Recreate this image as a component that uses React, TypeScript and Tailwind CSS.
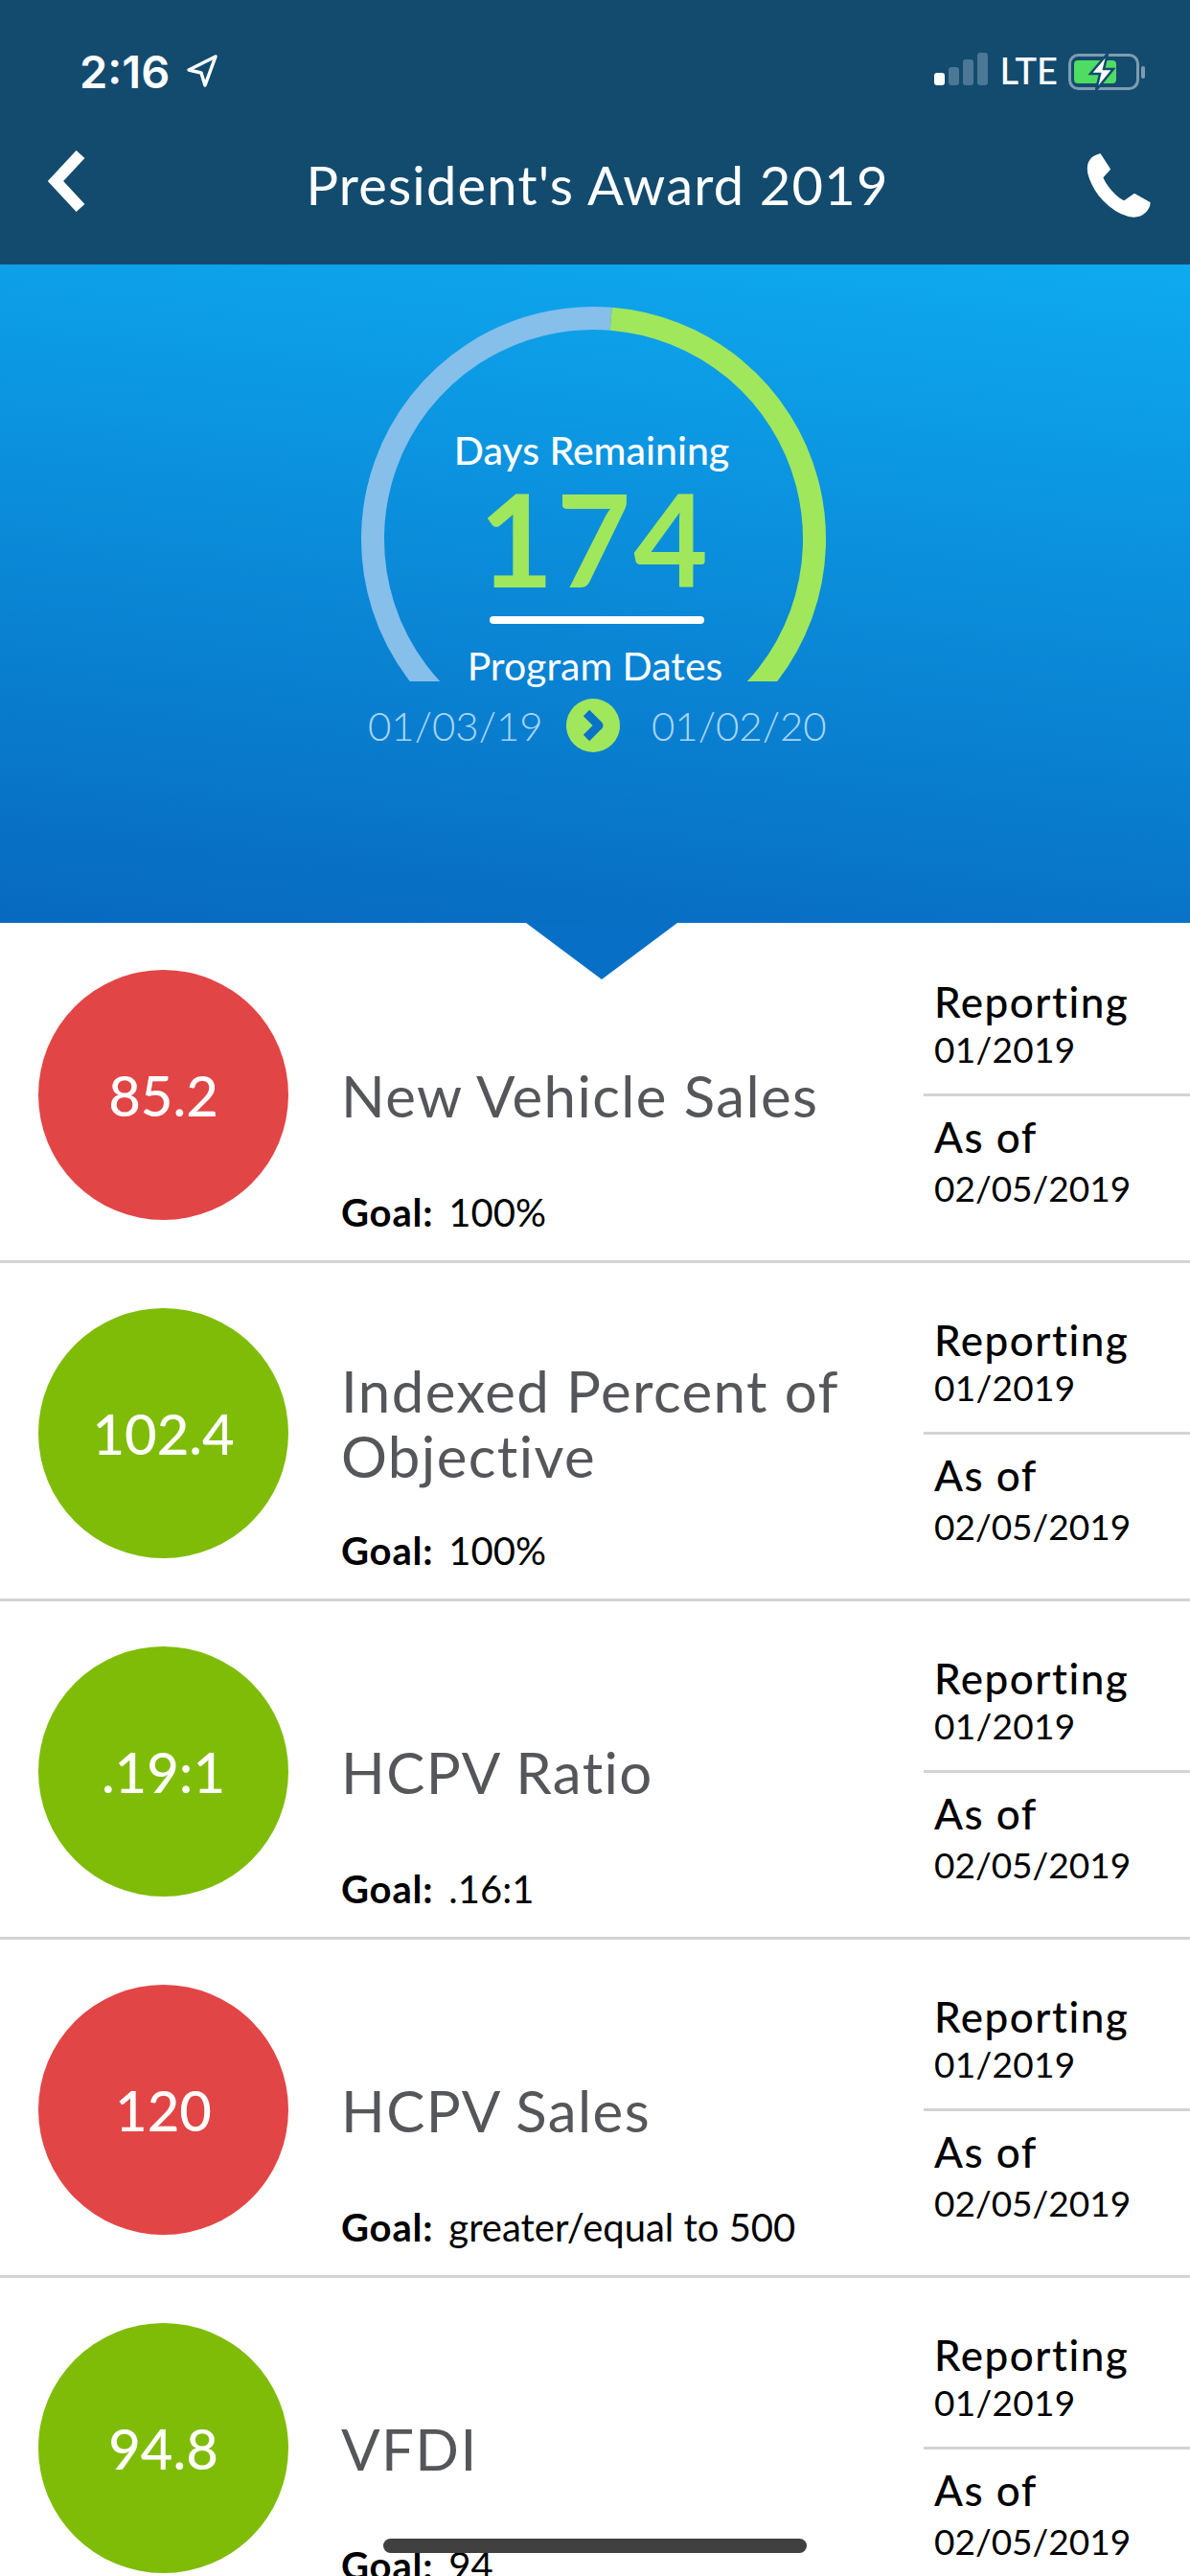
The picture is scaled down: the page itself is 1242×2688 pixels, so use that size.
const font = { fontFamily: "Lato, 'Noto Sans', sans-serif" };

const rows = [
  { score: "85.2", color: "bg-[#e24545]", title: "New Vehicle Sales", titlePad: "pt-[80px]", goal: "100%" },
  { score: "102.4", color: "bg-[#7fbc07]", title: "Indexed Percent of Objective", titlePad: "pt-[58px]", goal: "100%" },
  { score: ".19:1", color: "bg-[#7fbc07]", title: "HCPV Ratio", titlePad: "pt-[80px]", goal: ".16:1" },
  { score: "120", color: "bg-[#e24545]", title: "HCPV Sales", titlePad: "pt-[80px]", goal: "greater/equal to 500" },
  { score: "94.8", color: "bg-[#7fbc07]", title: "VFDI", titlePad: "pt-[80px]", goal: "94" },
];

function StatusBar() {
  return (
    <div className="flex items-center justify-between h-[102px] pt-[46px] pl-[83px] pr-[47px] text-white">
      <div className="flex items-center gap-[17px]">
        <span className="text-[47px] leading-none font-[Inter] font-semibold">2:16</span>
        <svg width="34" height="36" viewBox="0 0 34 36" fill="none">
          <path d="M31 3 L3 17 L16 20 L20 33 Z" stroke="white" strokeWidth="3.5" strokeLinejoin="round" />
        </svg>
      </div>
      <div className="flex items-end">
        <div className="flex items-end gap-[4px] mr-[13px] mb-[6px]">
          <div className="w-[11px] h-[13px] rounded-[3px] bg-white" />
          <div className="w-[11px] h-[19px] rounded-[3px] bg-[#4a7895]" />
          <div className="w-[11px] h-[27px] rounded-[3px] bg-[#4a7895]" />
          <div className="w-[11px] h-[34px] rounded-[3px] bg-[#4a7895]" />
        </div>
        <span className="text-[38px] leading-none font-medium mr-[11px] mb-[3px]">LTE</span>
        <svg width="80" height="38" viewBox="0 0 80 38" fill="none" className="mb-[1px]">
          <rect x="1.5" y="1.5" width="71" height="35" rx="9" stroke="#7e9cb1" strokeWidth="3" />
          <rect x="6" y="7" width="44" height="24" rx="4" fill="#4fdc63" />
          <rect x="76" y="13" width="4" height="13" rx="2" fill="#7e9cb1" />
          <path d="M41 0 L23 21 L33 21 L29 38 L47 16 L37 16 Z" fill="white" stroke="#134b6f" strokeWidth="2.5" />
        </svg>
      </div>
    </div>
  );
}

function Gauge() {
  return (
    <svg width="500" height="400" viewBox="0 0 500 400" fill="none" className="absolute left-[370px] top-[40px]">
      <defs>
        <clipPath id="gauge-cut">
          <rect x="0" y="0" width="500" height="395" />
        </clipPath>
      </defs>
      <g clipPath="url(#gauge-cut)" strokeWidth="24">
        <path d="M 118 435.8 A 230.5 230.5 0 0 1 267.7 16.7" stroke="#85bfea" />
        <path d="M 267.7 16.7 A 230.5 230.5 0 0 1 381 435.8" stroke="#a0e75c" />
      </g>
    </svg>
  );
}

function Hero() {
  return (
    <div className="relative h-[687px] bg-[linear-gradient(186deg,#0eaaf0,#0769c0)] text-white">
      <Gauge />
      <div className="relative flex flex-col items-center pt-[171px]">
        <div className="text-[41px] leading-[46px] font-medium ml-[-7px]">Days Remaining</div>
        <div className="text-[134px] leading-[110px] font-bold text-[#a0e75c] mt-[14px] tracking-[3px]">174</div>
        <div className="w-[224px] h-[8px] rounded-full bg-white mt-[26px] ml-[4px]" />
        <div className="text-[41px] leading-[46px] mt-[21px]">Program Dates</div>
        <div className="flex items-center mt-[11px] text-[42px] leading-[56px] font-light text-[#a9d5f2]">
          <span className="w-[207px]">01/03/19</span>
          <div className="w-[56px] h-[56px] rounded-full bg-[#a0e75c] flex items-center justify-center mr-[33px]">
            <svg width="26" height="36" viewBox="0 0 26 36" fill="none">
              <path d="M6 5 L19 18 L6 31" stroke="#0a72c8" strokeWidth="9" strokeLinejoin="round" />
            </svg>
          </div>
          <span className="w-[178px]">01/02/20</span>
        </div>
      </div>
    </div>
  );
}

function Row({ score, color, title, titlePad, goal }: (typeof rows)[number]) {
  return (
    <div className="flex h-[353px] border-b-[3px] border-[#d3d3d3] shrink-0">
      <div className="flex w-[356px] pl-[40px] pt-[47px]">
        <div className={`w-[261px] h-[261px] rounded-full flex items-center justify-center text-white text-[58px] font-medium ${color}`}>
          {score}
        </div>
      </div>
      <div className="flex-1 flex flex-col">
        <div className={`flex-1 flex items-center ${titlePad}`}>
          <div className="text-[60px] leading-[68px] text-[#55565a] tracking-[1.4px] max-w-[590px]">{title}</div>
        </div>
        <div className="h-[75px] text-[40px] leading-[50px] text-black">
          <span className="font-bold tracking-[0.8px]">Goal:</span>
          <span className="ml-[16px]">{goal}</span>
        </div>
      </div>
      <div className="w-[278px] flex flex-col pt-[55px] text-black">
        <div className="h-[124px] border-b-[3px] border-[#d3d3d3] pl-[11px]">
          <div className="text-[44px] leading-[50px] font-medium tracking-[1.5px]">Reporting</div>
          <div className="text-[37px] leading-[50px] tracking-[0.3px]">01/2019</div>
        </div>
        <div className="pl-[11px] pt-[17px]">
          <div className="text-[44px] leading-[50px] font-medium tracking-[1.5px]">As of</div>
          <div className="text-[37px] leading-[50px] mt-[4px]">02/05/2019</div>
        </div>
      </div>
    </div>
  );
}

export default function App() {
  return (
    <div className="relative h-[2688px] w-[1242px] overflow-hidden bg-white" style={font}>
      <div className="h-[276px] bg-[#134b6f]">
        <StatusBar />
        <div className="relative flex items-center justify-center h-[110px] mt-[36px] text-white">
          <svg width="60" height="85" viewBox="0 0 60 85" fill="none" className="absolute left-[40px] top-[10px]">
            <path d="M44 13 L18 41 L44 69" stroke="white" strokeWidth="12" />
          </svg>
          <span className="text-[56px] leading-none tracking-[1.2px] ml-[5px]">President's Award 2019</span>
          <svg width="110" height="90" viewBox="0 0 330 270" fill="white" stroke="white" strokeWidth="4" strokeLinejoin="round" className="absolute left-[1110px] top-[12px]">
            <path d="M115 33 L145 80 L122 105 C130 130 165 170 190 180 L222 158 L270 185 C268 205 250 228 220 228 C165 225 110 170 90 125 C75 95 70 70 85 50 C93 40 105 35 115 33 Z" />
          </svg>
        </div>
      </div>
      <Hero />
      <div className="absolute left-[549px] top-[963px] w-0 h-0 border-l-[79px] border-r-[79px] border-t-[59px] border-l-transparent border-r-transparent border-t-[#076fc5]" />
      <div className="flex flex-col pt-[2px]">
        {rows.map((r) => (
          <Row key={r.title} {...r} />
        ))}
      </div>
      <div className="absolute left-[400px] top-[2649px] w-[442px] h-[15px] rounded-full bg-[#404040]" />
    </div>
  );
}
